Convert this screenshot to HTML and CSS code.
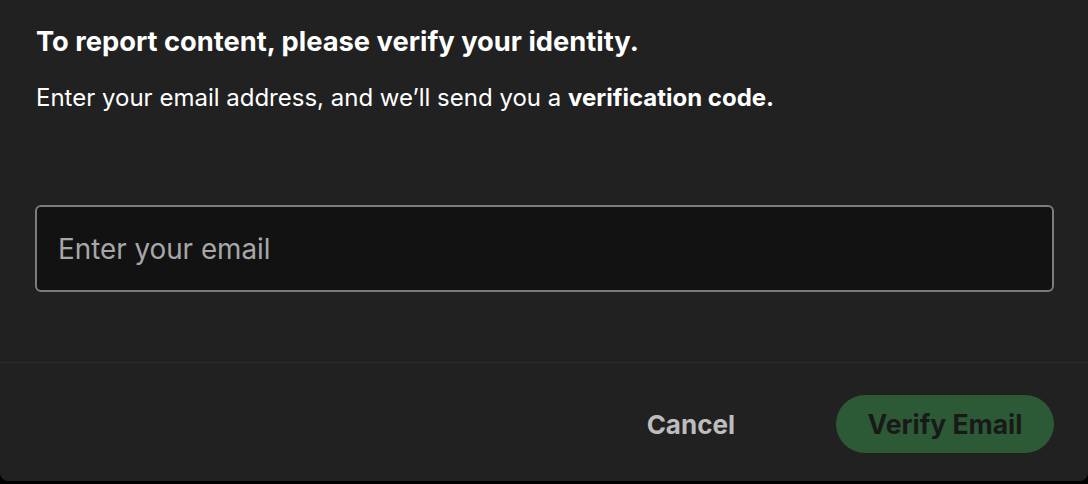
FILE: index.html
```html
<!DOCTYPE html>
<html lang="en">
<head>
<meta charset="utf-8">
<title>Verify identity</title>
<link rel="stylesheet" href="styles.css">
</head>
<body>
<div class="dialog">
  <div class="dialog-body">
    <h1 class="title">To report content, please verify your identity.</h1>
    <p class="subtitle">Enter your email address, and we’ll send you a <strong>verification code.</strong></p>
    <input class="email-input" type="email" placeholder="Enter your email">
  </div>
  <div class="dialog-footer">
    <button class="btn-cancel" type="button">Cancel</button>
    <button class="btn-verify" type="button">Verify Email</button>
  </div>
</div>
</body>
</html>
```

FILE: styles.css
```css
html, body {
  margin: 0;
  padding: 0;
  background: #000;
}
body {
  width: 1088px;
  height: 484px;
  font-family: Inter, "Noto Sans", sans-serif;
  color: #fff;
}
.dialog {
  height: 481px;
  background: #212121;
  border-radius: 0 0 8px 8px;
  display: flex;
  flex-direction: column;
}
.dialog-body {
  padding: 24px 34px 70px 35px;
  border-bottom: 1px solid #2a2a2a;
}
.title {
  margin: 0 0 0 1px;
  font-size: 27.3px;
  line-height: 36px;
  font-weight: 700;
  letter-spacing: 0;
}
.subtitle {
  margin: 22px 0 0 1px;
  font-size: 24px;
  line-height: 32px;
  font-weight: 400;
  letter-spacing: 0;
}
.subtitle strong {
  font-weight: 700;
}
.email-input {
  display: block;
  box-sizing: border-box;
  margin-top: 91px;
  width: 1019px;
  height: 87px;
  background: #121212;
  border: 2px solid #7c7c7c;
  border-radius: 6px;
  padding: 0 21px;
  font-family: inherit;
  font-size: 27.8px;
  color: #fff;
  outline: none;
}
.email-input::placeholder {
  color: #a7a7a7;
}
.dialog-footer {
  flex: 1;
  display: flex;
  justify-content: flex-end;
  align-items: center;
  padding: 4px 34px 0 0;
  gap: 101px;
}
.btn-cancel {
  background: none;
  border: none;
  font-family: inherit;
  font-size: 26px;
  font-weight: 700;
  color: #bdbdbd;
  padding: 0;
  cursor: pointer;
}
.btn-verify {
  width: 218px;
  height: 58px;
  border: none;
  border-radius: 29px;
  background: #2d5a36;
  font-family: inherit;
  font-size: 26.5px;
  font-weight: 700;
  color: #191919;
  padding: 0;
  cursor: pointer;
}
```
